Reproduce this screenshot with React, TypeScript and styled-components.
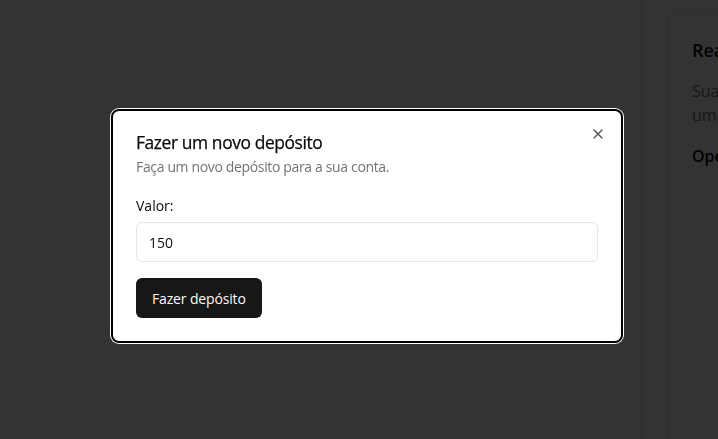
import React from "react";
import styled, { createGlobalStyle } from "styled-components";
import { X } from "lucide-react";

const Global = createGlobalStyle`
  html, body { margin: 0; padding: 0; background: #ffffff; }
  body {
    font-family: "Open Sans", "Noto Sans", sans-serif;
    color: #0a0a0a;
    overflow: hidden;
    width: 718px;
    height: 439px;
  }
  * { box-sizing: border-box; }
`;

const Page = styled.div`
  display: flex;
  width: 718px;
  height: 439px;
  overflow: hidden;
`;

const Main = styled.main`
  flex: 0 0 642px;
  border-right: 1px solid #e5e5e5;
`;

const Sidebar = styled.aside`
  flex: 0 0 auto;
  padding: 12px 0 0 25px;
`;

const Card = styled.section`
  width: 360px;
  height: 460px;
  border: 1px solid #e5e5e5;
  border-radius: 8px;
  padding: 23px 23px 23px 24px;
`;

const CardTitle = styled.h2`
  margin: 0;
  font-size: 18px;
  line-height: 28px;
  font-weight: 600;
  white-space: nowrap;
`;

const CardText = styled.p`
  margin: 15px 0 0;
  font-size: 16px;
  line-height: 24px;
  color: #737373;
  white-space: nowrap;
`;

const CardSub = styled.h3`
  margin: 17px 0 0;
  font-size: 16px;
  line-height: 24px;
  font-weight: 600;
  white-space: nowrap;
`;

const Overlay = styled.div`
  position: fixed;
  inset: 0;
  background: rgba(0, 0, 0, 0.8);
`;

const Dialog = styled.div`
  position: fixed;
  left: 111px;
  top: 109px;
  width: 512px;
  background: #ffffff;
  border: 2px solid #000000;
  border-radius: 8px;
  box-shadow: 0 0 0 1px #ffffff;
  padding: 21px 23px 23px;
  display: flex;
  flex-direction: column;
`;

const Title = styled.h2`
  margin: 0;
  font-size: 17.4px;
  line-height: 20px;
  font-weight: 500;
  letter-spacing: -0.4px;
  -webkit-text-stroke: 0.25px #0a0a0a;
`;

const Description = styled.p`
  margin: 5px 0 0;
  font-size: 14px;
  line-height: 20px;
  color: #737373;
  letter-spacing: -0.35px;
`;

const Label = styled.label`
  margin-top: 19px;
  font-size: 14px;
  line-height: 20px;
  font-weight: 500;
`;

const Input = styled.input`
  margin-top: 6px;
  height: 40px;
  width: 100%;
  border: 1px solid #e5e5e5;
  border-radius: 6px;
  padding: 0 12px;
  font-family: inherit;
  font-size: 14px;
  color: #0a0a0a;
  background: #ffffff;
  outline: none;
`;

const Button = styled.button`
  margin-top: 16px;
  align-self: flex-start;
  height: 40px;
  padding: 0 16px;
  border: none;
  border-radius: 6px;
  background: #171717;
  color: #fafafa;
  font-family: inherit;
  font-size: 14px;
  font-weight: 500;
  letter-spacing: -0.15px;
  cursor: pointer;
`;

const Close = styled.button`
  position: absolute;
  top: 15px;
  right: 15px;
  width: 16px;
  height: 16px;
  padding: 0;
  border: none;
  background: transparent;
  color: #0a0a0a;
  opacity: 0.7;
  display: flex;
  align-items: center;
  justify-content: center;
  cursor: pointer;
`;

export default function App() {
  return (
    <>
      <Global />
      <Page>
        <Main />
        <Sidebar>
          <Card>
            <CardTitle>Realizar operações</CardTitle>
            <CardText>
              Sua conta está pronta para
              <br />
              uma nova operação.
            </CardText>
            <CardSub>Operações recentes</CardSub>
          </Card>
        </Sidebar>
      </Page>
      <Overlay />
      <Dialog role="dialog">
        <Title>Fazer um novo depósito</Title>
        <Description>Faça um novo depósito para a sua conta.</Description>
        <Label htmlFor="valor">Valor:</Label>
        <Input id="valor" defaultValue="150" />
        <Button>Fazer depósito</Button>
        <Close aria-label="Fechar">
          <X size={16} strokeWidth={2} />
        </Close>
      </Dialog>
    </>
  );
}
